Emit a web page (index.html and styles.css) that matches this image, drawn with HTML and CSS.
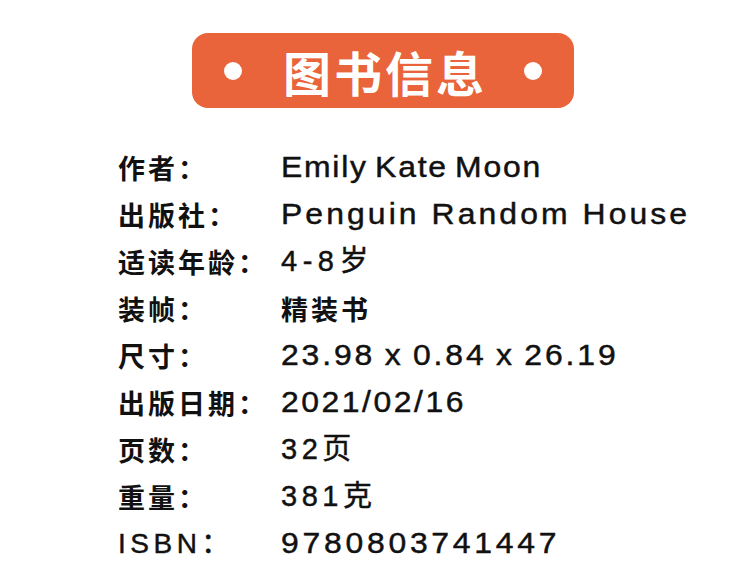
FILE: index.html
```html
<!DOCTYPE html>
<html lang="zh">
<head>
<meta charset="utf-8">
<link rel="stylesheet" href="styles.css">
</head>
<body>
<div class="banner">
  <span class="dot"></span>
  <h1 class="title">图书信息</h1>
  <span class="dot"></span>
</div>
<dl class="info">
  <dt>作者：</dt><dd class="latin wide author">Emily Kate Moon</dd>
  <dt>出版社：</dt><dd class="latin wide publisher">Penguin Random House</dd>
  <dt>适读年龄：</dt><dd class="latin age">4-8岁</dd>
  <dt>装帧：</dt><dd>精装书</dd>
  <dt>尺寸：</dt><dd class="latin wide size">23.98 x 0.84 x 26.19</dd>
  <dt>出版日期：</dt><dd class="latin wide date">2021/02/16</dd>
  <dt>页数：</dt><dd class="latin">32页</dd>
  <dt>重量：</dt><dd class="latin">381克</dd>
  <dt class="latin isbn-label">ISBN：</dt><dd class="latin wide isbn">9780803741447</dd>
</dl>
</body>
</html>
```

FILE: styles.css
```css
html, body {
  margin: 0;
  padding: 0;
  background: #ffffff;
}
body {
  font-family: "Liberation Sans", "Noto Sans CJK SC", sans-serif;
  color: #111111;
}
.banner {
  margin: 33px 0 0 192px;
  width: 382px;
  height: 75px;
  box-sizing: border-box;
  padding: 0 32px;
  border-radius: 16px;
  background: #e9643a;
  display: flex;
  align-items: center;
  justify-content: space-between;
}
.dot {
  width: 18px;
  height: 18px;
  border-radius: 50%;
  background: #ffffff;
}
.title {
  margin: 0 0 0 4px;
  font-family: "Noto Sans CJK SC", sans-serif;
  font-weight: 700;
  font-size: 48px;
  letter-spacing: 3px;
  color: #ffffff;
  line-height: 1;
}
.info {
  margin: 36px 0 0 118px;
  display: grid;
  grid-template-columns: 163px auto;
  justify-items: start;
  line-height: 47px;
  font-size: 27px;
}
.info dt {
  font-family: "Noto Sans CJK SC", sans-serif;
  font-weight: 700;
  letter-spacing: 3px;
}
.info dd {
  margin: 0;
  font-family: "Noto Sans CJK SC", sans-serif;
  font-weight: 700;
  letter-spacing: 3px;
}
.info .latin {
  font-family: "Liberation Sans", "Noto Sans CJK SC", sans-serif;
  font-weight: 400;
  font-size: 29px;
  letter-spacing: 4.5px;
  -webkit-text-stroke: 0.45px #111111;
}
.info .wide {
  transform: scaleX(1.1);
  transform-origin: left center;
}
.info .isbn-label {
  font-size: 28px;
  letter-spacing: 4.5px;
}
.info .author {
  letter-spacing: 1.6px;
  word-spacing: -3px;
}
.info .publisher {
  letter-spacing: 2.8px;
}
.info .age {
  letter-spacing: 5.5px;
}
.info .size {
  letter-spacing: 2.6px;
  word-spacing: -2px;
}
.info .date {
  letter-spacing: 2.3px;
}
.info .isbn {
  letter-spacing: 3.4px;
}
```
